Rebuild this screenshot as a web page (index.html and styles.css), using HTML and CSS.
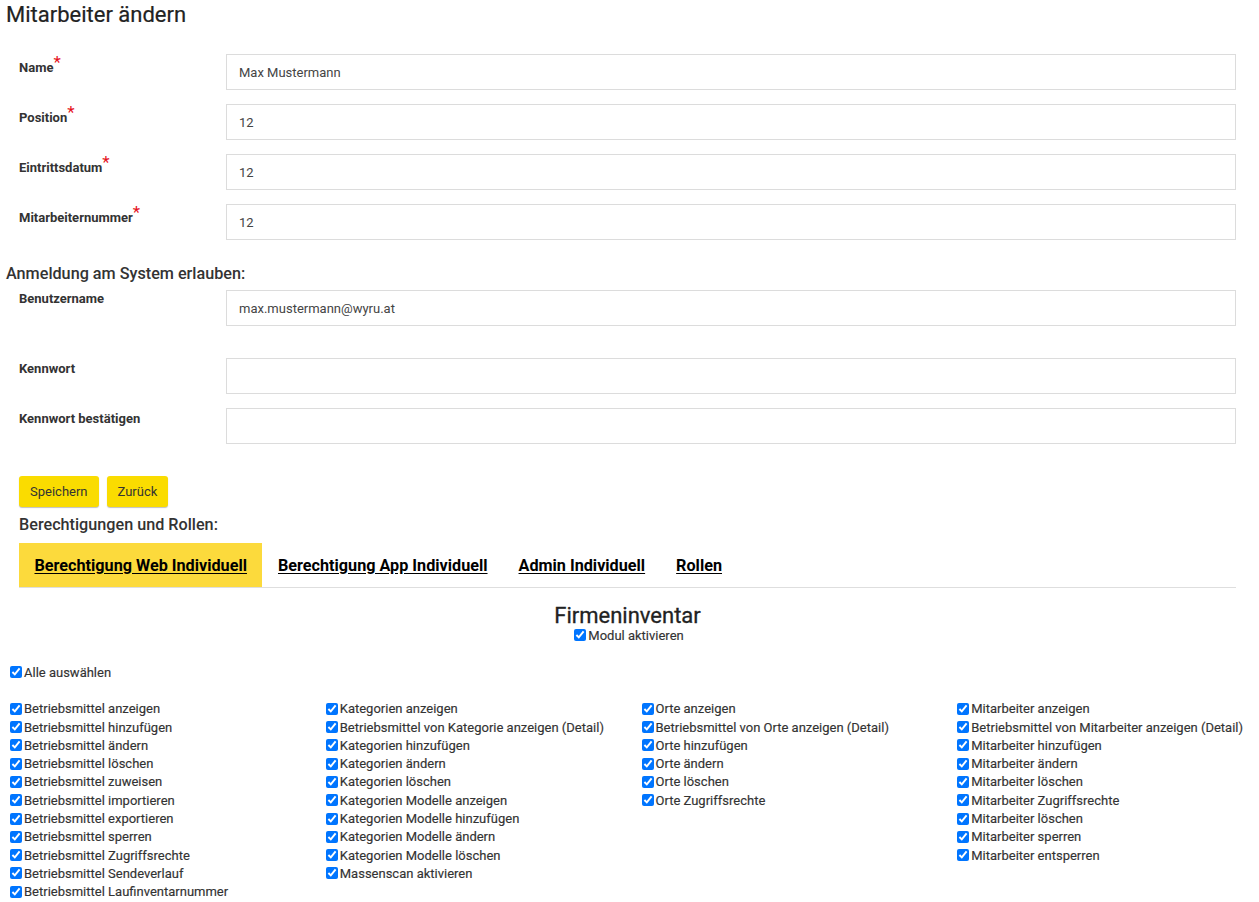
FILE: index.html
```html
<!DOCTYPE html>
<html lang="de">
<head>
    <meta charset="UTF-8">
    <meta name="viewport" content="width=device-width, initial-scale=1.0">
    <title>Mitarbeiter ändern</title>
    <link rel="stylesheet" href="styles.css">
</head>
<body>
    <h1 class="page-title">Mitarbeiter ändern</h1>

    <form class="form">
        <div class="form-row">
            <label class="form-label star-label">Name<span class="req">*</span></label>
            <input class="form-input" type="text" value="Max Mustermann">
        </div>
        <div class="form-row">
            <label class="form-label star-label">Position<span class="req">*</span></label>
            <input class="form-input" type="text" value="12">
        </div>
        <div class="form-row">
            <label class="form-label star-label">Eintrittsdatum<span class="req">*</span></label>
            <input class="form-input" type="text" value="12">
        </div>
        <div class="form-row">
            <label class="form-label star-label">Mitarbeiternummer<span class="req">*</span></label>
            <input class="form-input" type="text" value="12">
        </div>

        <h3 class="section-title">Anmeldung am System erlauben:</h3>
        <div class="form-row row-user">
            <label class="form-label label-user">Benutzername</label>
            <input class="form-input" type="text" value="max.mustermann@wyru.at">
        </div>
        <div class="form-row">
            <label class="form-label">Kennwort</label>
            <input class="form-input" type="password">
        </div>
        <div class="form-row">
            <label class="form-label">Kennwort bestätigen</label>
            <input class="form-input" type="password">
        </div>

        <div class="buttons">
            <button type="button" class="btn">Speichern</button>
            <button type="button" class="btn">Zurück</button>
        </div>
    </form>

    <div class="rights">
        <h3 class="rights-title">Berechtigungen und Rollen:</h3>
        <ul class="tabs">
            <li class="tab active"><a href="#">Berechtigung Web Individuell</a></li>
            <li class="tab"><a href="#">Berechtigung App Individuell</a></li>
            <li class="tab"><a href="#">Admin Individuell</a></li>
            <li class="tab"><a href="#">Rollen</a></li>
        </ul>

        <div class="module">
            <h2 class="module-title">Firmeninventar</h2>
            <label class="check check-center"><input type="checkbox" checked>Modul aktivieren</label>
        </div>
    </div>

    <div class="perm">
        <label class="check"><input type="checkbox" checked>Alle auswählen</label>

        <div class="perm-grid">
            <div class="perm-col">
                <label class="check"><input type="checkbox" checked>Betriebsmittel anzeigen</label>
                <label class="check"><input type="checkbox" checked>Betriebsmittel hinzufügen</label>
                <label class="check"><input type="checkbox" checked>Betriebsmittel ändern</label>
                <label class="check"><input type="checkbox" checked>Betriebsmittel löschen</label>
                <label class="check"><input type="checkbox" checked>Betriebsmittel zuweisen</label>
                <label class="check"><input type="checkbox" checked>Betriebsmittel importieren</label>
                <label class="check"><input type="checkbox" checked>Betriebsmittel exportieren</label>
                <label class="check"><input type="checkbox" checked>Betriebsmittel sperren</label>
                <label class="check"><input type="checkbox" checked>Betriebsmittel Zugriffsrechte</label>
                <label class="check"><input type="checkbox" checked>Betriebsmittel Sendeverlauf</label>
                <label class="check"><input type="checkbox" checked>Betriebsmittel Laufinventarnummer</label>
            </div>
            <div class="perm-col">
                <label class="check"><input type="checkbox" checked>Kategorien anzeigen</label>
                <label class="check"><input type="checkbox" checked>Betriebsmittel von Kategorie anzeigen (Detail)</label>
                <label class="check"><input type="checkbox" checked>Kategorien hinzufügen</label>
                <label class="check"><input type="checkbox" checked>Kategorien ändern</label>
                <label class="check"><input type="checkbox" checked>Kategorien löschen</label>
                <label class="check"><input type="checkbox" checked>Kategorien Modelle anzeigen</label>
                <label class="check"><input type="checkbox" checked>Kategorien Modelle hinzufügen</label>
                <label class="check"><input type="checkbox" checked>Kategorien Modelle ändern</label>
                <label class="check"><input type="checkbox" checked>Kategorien Modelle löschen</label>
                <label class="check"><input type="checkbox" checked>Massenscan aktivieren</label>
            </div>
            <div class="perm-col">
                <label class="check"><input type="checkbox" checked>Orte anzeigen</label>
                <label class="check"><input type="checkbox" checked>Betriebsmittel von Orte anzeigen (Detail)</label>
                <label class="check"><input type="checkbox" checked>Orte hinzufügen</label>
                <label class="check"><input type="checkbox" checked>Orte ändern</label>
                <label class="check"><input type="checkbox" checked>Orte löschen</label>
                <label class="check"><input type="checkbox" checked>Orte Zugriffsrechte</label>
            </div>
            <div class="perm-col">
                <label class="check"><input type="checkbox" checked>Mitarbeiter anzeigen</label>
                <label class="check"><input type="checkbox" checked>Betriebsmittel von Mitarbeiter anzeigen (Detail)</label>
                <label class="check"><input type="checkbox" checked>Mitarbeiter hinzufügen</label>
                <label class="check"><input type="checkbox" checked>Mitarbeiter ändern</label>
                <label class="check"><input type="checkbox" checked>Mitarbeiter löschen</label>
                <label class="check"><input type="checkbox" checked>Mitarbeiter Zugriffsrechte</label>
                <label class="check"><input type="checkbox" checked>Mitarbeiter löschen</label>
                <label class="check"><input type="checkbox" checked>Mitarbeiter sperren</label>
                <label class="check"><input type="checkbox" checked>Mitarbeiter entsperren</label>
            </div>
        </div>
    </div>
</body>
</html>
```

FILE: styles.css
```css
body {
    font-family: Roboto, "Liberation Sans", Arial, sans-serif;
    margin: 0;
    padding: 0 6px 10px;
    color: #333;
    background-color: #fff;
}
.page-title {
    font-size: 22px;
    font-weight: 400;
    color: #222;
    margin: 0;
    padding-top: 2px;
    height: 52px;
    line-height: 26px;
    -webkit-text-stroke: 0.2px #222;
}
.form {
    padding: 0 17px 0 13px;
}
.form-row {
    display: flex;
    align-items: flex-start;
    margin-bottom: 14px;
}
.form-label {
    width: 207px;
    flex-shrink: 0;
    font-size: 13px;
    font-weight: 700;
    color: #333;
    padding-top: 3px;
}
.star-label {
    padding-top: 0;
}
.req {
    color: #e5101a;
    font-size: 17px;
    vertical-align: 4px;
    line-height: 1;
    font-weight: 400;
}
.form-input {
    flex: 1;
    height: 36px;
    box-sizing: border-box;
    border: 1px solid #dcdcdc;
    border-radius: 0;
    padding: 0 12px;
    font-family: inherit;
    font-size: 13px;
    color: #444;
    outline: none;
}
.section-title {
    font-size: 16.2px;
    font-weight: 500;
    margin: 24px 0 7px -13px;
    color: #333;
}
.row-user {
    margin-bottom: 32px;
}
.label-user {
    padding-top: 1px;
}
.buttons {
    display: flex;
    gap: 8px;
    padding-top: 18px;
}
.btn {
    height: 31px;
    padding: 0 11px;
    border: none;
    border-radius: 3px;
    background-color: #fadc00;
    box-shadow: 0 1px 1px rgba(0, 0, 0, 0.25);
    font-family: inherit;
    font-size: 13px;
    color: #333;
    cursor: pointer;
}
.btn:hover {
    background-color: #f0d200;
}
.rights {
    padding: 0 17px 0 13px;
}
.rights-title {
    font-size: 16.2px;
    font-weight: 500;
    margin: 8px 0 9px;
    color: #333;
}
.tabs {
    display: flex;
    list-style: none;
    margin: 0;
    padding: 0;
    border-bottom: 1px solid #dedede;
}
.tab a {
    display: block;
    height: 44px;
    line-height: 45px;
    padding: 0 15.5px;
    font-size: 16.2px;
    font-weight: 700;
    color: #000;
    text-decoration: underline;
    text-underline-offset: 2px;
}
.tab.active a {
    background-color: #fcda3c;
}
.module {
    text-align: center;
    padding-top: 15px;
}
.module-title {
    font-size: 22px;
    font-weight: 400;
    color: #222;
    margin: 0;
    line-height: 26px;
    -webkit-text-stroke: 0.3px #222;
}
.check {
    display: flex;
    align-items: center;
    height: 18.3px;
    font-size: 13px;
    font-weight: 400;
    color: #333;
    white-space: nowrap;
    -webkit-text-stroke: 0.15px #333;
}
.check input {
    width: 12px;
    height: 12px;
    margin: 0 2px 0 4px;
}
.check-center {
    justify-content: center;
    padding-right: 1px;
    margin-top: -3px;
}
.perm {
    padding-top: 19px;
}
.perm-grid {
    display: grid;
    grid-template-columns: 315.75px 315.75px 315.75px 1fr;
    margin-top: 18px;
}
```
